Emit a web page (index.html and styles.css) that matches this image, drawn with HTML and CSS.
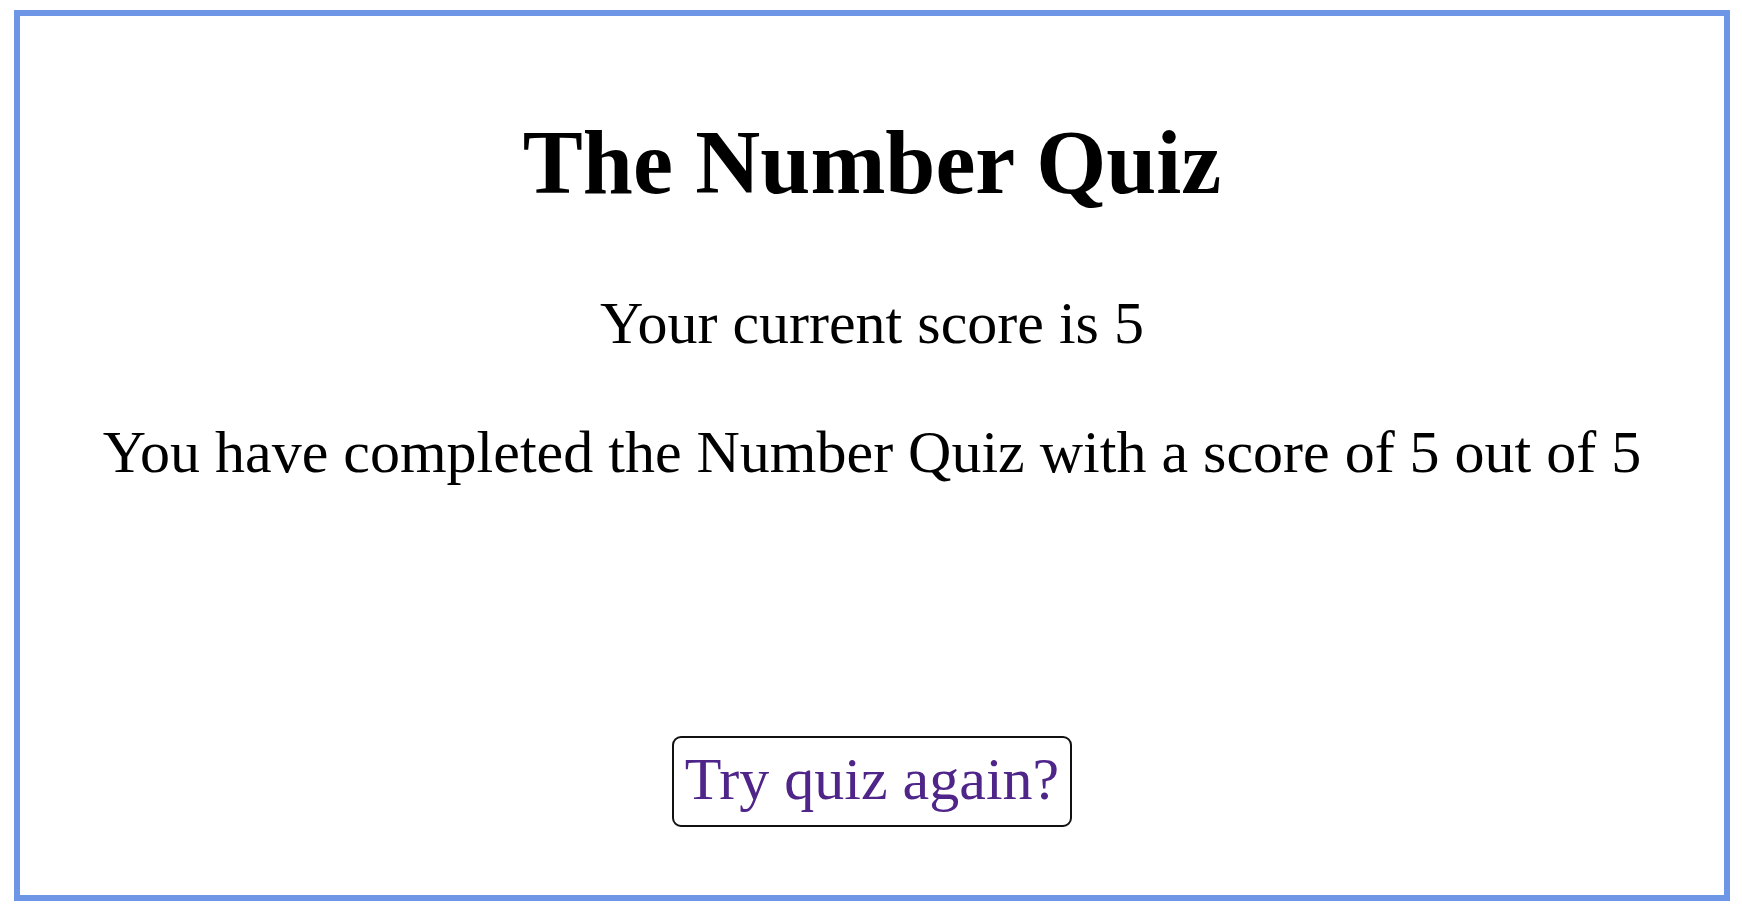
FILE: index.html
```html
<!DOCTYPE html>
<html lang="en">
<head>
<meta charset="utf-8">
<title>The Number Quiz</title>
<link rel="stylesheet" href="styles.css">
</head>
<body>
<main class="quiz">
  <h1 class="quiz-title">The Number Quiz</h1>
  <p class="quiz-score">Your current score is 5</p>
  <p class="quiz-result">You have completed the Number Quiz with a score of 5 out of 5</p>
  <div class="quiz-actions">
    <a class="retry" href="#">Try quiz again?</a>
  </div>
</main>
</body>
</html>
```

FILE: styles.css
```css
html, body {
  margin: 0;
  padding: 0;
  background: #ffffff;
}

body {
  padding: 10px 12px 11px 14px;
  font-family: "Liberation Serif", "Times New Roman", serif;
  color: #000;
}

.quiz {
  box-sizing: border-box;
  width: 1716px;
  height: 891px;
  border: 6px solid #6d97e6;
  text-align: center;
  overflow: hidden;
}

.quiz-title {
  margin: 95px 0 0;
  font-size: 90px;
  font-weight: bold;
  line-height: 1.15;
}

.quiz-score,
.quiz-result {
  font-size: 60px;
  line-height: 1.15;
  margin: 0;
}

.quiz-score {
  margin-top: 74px;
}

.quiz-result {
  margin-top: 60px;
}

.quiz-actions {
  margin-top: 249px;
}

.retry {
  display: inline-block;
  font-size: 60px;
  line-height: 1.15;
  color: #4f2589;
  text-decoration: none;
  border: 2px solid #111;
  border-radius: 9px;
  padding: 7px 11px 11px;
}
```
